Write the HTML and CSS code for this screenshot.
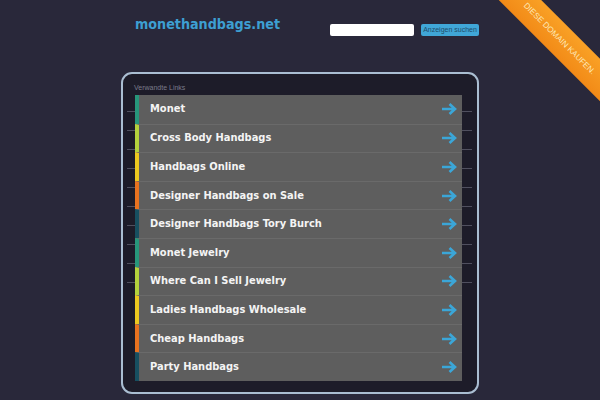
FILE: index.html
```html
<!DOCTYPE html>
<html lang="de">
<head>
<meta charset="utf-8">
<title>monethandbags.net</title>
<link rel="stylesheet" href="styles.css">
</head>
<body>
<header class="top">
  <h1 class="site">monethandbags.net</h1>
  <form class="search">
    <input class="search-input" type="text">
    <button class="search-btn" type="button">Anzeigen suchen</button>
  </form>
</header>
<main class="panel">
  <div class="label">Verwandte Links</div>
  <div class="rail">
    <ul class="links">
      <li class="row c1"><span class="txt">Monet</span><svg class="arr" viewBox="0 0 16 12"><path d="M1 6H14M8.5 1L14 6L8.5 11"/></svg></li>
      <li class="row c2"><span class="txt">Cross Body Handbags</span><svg class="arr" viewBox="0 0 16 12"><path d="M1 6H14M8.5 1L14 6L8.5 11"/></svg></li>
      <li class="row c3"><span class="txt">Handbags Online</span><svg class="arr" viewBox="0 0 16 12"><path d="M1 6H14M8.5 1L14 6L8.5 11"/></svg></li>
      <li class="row c4"><span class="txt">Designer Handbags on Sale</span><svg class="arr" viewBox="0 0 16 12"><path d="M1 6H14M8.5 1L14 6L8.5 11"/></svg></li>
      <li class="row c5"><span class="txt">Designer Handbags Tory Burch</span><svg class="arr" viewBox="0 0 16 12"><path d="M1 6H14M8.5 1L14 6L8.5 11"/></svg></li>
      <li class="row c1"><span class="txt">Monet Jewelry</span><svg class="arr" viewBox="0 0 16 12"><path d="M1 6H14M8.5 1L14 6L8.5 11"/></svg></li>
      <li class="row c2"><span class="txt">Where Can I Sell Jewelry</span><svg class="arr" viewBox="0 0 16 12"><path d="M1 6H14M8.5 1L14 6L8.5 11"/></svg></li>
      <li class="row c3"><span class="txt">Ladies Handbags Wholesale</span><svg class="arr" viewBox="0 0 16 12"><path d="M1 6H14M8.5 1L14 6L8.5 11"/></svg></li>
      <li class="row c4"><span class="txt">Cheap Handbags</span><svg class="arr" viewBox="0 0 16 12"><path d="M1 6H14M8.5 1L14 6L8.5 11"/></svg></li>
      <li class="row c5"><span class="txt">Party Handbags</span><svg class="arr" viewBox="0 0 16 12"><path d="M1 6H14M8.5 1L14 6L8.5 11"/></svg></li>
    </ul>
  </div>
</main>
<div class="corner"><div class="ribbon">DIESE DOMAIN KAUFEN.</div></div>
</body>
</html>
```
FILE: styles.css
```css
html, body {
  margin: 0;
  padding: 0;
}
body {
  background: #29283a;
  width: 600px;
  height: 400px;
  overflow: hidden;
  position: relative;
  font-family: "DejaVu Sans", sans-serif;
}
.top {
  display: grid;
  grid-template-columns: 195px auto;
  padding: 14px 0 0 135px;
  height: 24px;
}
.site {
  margin: 0;
  font-family: "DejaVu Sans Condensed", "DejaVu Sans", sans-serif;
  font-size: 14.2px;
  line-height: 20px;
  font-weight: bold;
  color: #3d9fd2;
}
.search {
  display: flex;
  align-items: center;
  gap: 7px;
  margin: 10px 0 0 0;
  height: 12px;
}
.search-input {
  width: 84px;
  height: 12px;
  box-sizing: border-box;
  border: none;
  border-radius: 2px;
  background: #ffffff;
  padding: 0;
  margin: 0;
}
.search-btn {
  width: 58px;
  height: 12px;
  box-sizing: border-box;
  border: none;
  border-radius: 2px;
  background: #40a7d7;
  color: #1f4d6b;
  font-family: "Liberation Sans", sans-serif;
  font-size: 7px;
  line-height: 12px;
  padding: 0;
  margin: 0;
  white-space: nowrap;
}
.panel {
  margin: 34px 0 0 121px;
  width: 358px;
  box-sizing: border-box;
  border: 2px solid #aabed2;
  border-radius: 11px;
  background: #1d1c29;
  padding: 9px 0 11px 0;
}
.label {
  font-family: "Liberation Sans", sans-serif;
  font-size: 7px;
  line-height: 9px;
  color: #7b7b8a;
  padding-left: 11px;
  margin-bottom: 3px;
}
.rail {
  padding: 0 15px 0 12px;
  background-image:
    repeating-linear-gradient(to bottom, transparent 0 18px, #50505f 18px 19px),
    repeating-linear-gradient(to bottom, transparent 0 18px, #50505f 18px 19px);
  background-size: 8px 190px, 10px 190px;
  background-position: 4px -2px, 339px -2px;
  background-repeat: no-repeat;
}
.links {
  list-style: none;
  margin: 0;
  padding: 0;
}
.row {
  display: flex;
  align-items: center;
  height: 28.6px;
  box-sizing: border-box;
  background: #5e5e5e;
  border-left: 4px solid #2a9b7c;
  border-top: 1px solid #6a6a6a;
  padding: 0 5px 0 11px;
}
.row:first-child {
  border-top: none;
}
.c1 { border-left-color: #27967a; }
.c2 { border-left-color: #b4d23c; }
.c3 { border-left-color: #ecc81f; }
.c4 { border-left-color: #e8721f; }
.c5 { border-left-color: #174f60; }
.txt {
  flex: 1;
  color: #f4f4f4;
  font-family: "DejaVu Sans Condensed", "DejaVu Sans", sans-serif;
  font-weight: bold;
  font-size: 11px;
  line-height: 14px;
}
.arr {
  width: 16px;
  height: 12px;
  fill: none;
  stroke: #3ba6d8;
  stroke-width: 2.6;
  stroke-linecap: butt;
  stroke-linejoin: miter;
}
.corner {
  position: absolute;
  top: 0;
  right: 0;
  width: 130px;
  height: 130px;
  overflow: hidden;
}
.ribbon {
  position: absolute;
  left: -11px;
  top: 24px;
  width: 200px;
  height: 30px;
  transform: rotate(45deg);
  background: linear-gradient(to bottom, #f9a126, #f28a17);
  color: #fde8b8;
  font-family: "Liberation Sans", sans-serif;
  font-size: 8.2px;
  line-height: 30px;
  text-align: center;
}
```
